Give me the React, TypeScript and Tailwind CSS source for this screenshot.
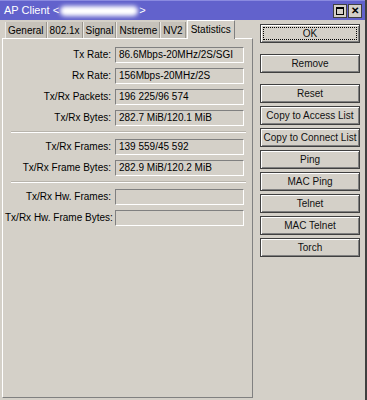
import React from 'react'

const rows1 = [
  { label: 'Tx Rate:', value: '86.6Mbps-20MHz/2S/SGI' },
  { label: 'Rx Rate:', value: '156Mbps-20MHz/2S' },
  { label: 'Tx/Rx Packets:', value: '196 225/96 574' },
  { label: 'Tx/Rx Bytes:', value: '282.7 MiB/120.1 MiB' },
]
const rows2 = [
  { label: 'Tx/Rx Frames:', value: '139 559/45 592' },
  { label: 'Tx/Rx Frame Bytes:', value: '282.9 MiB/120.2 MiB' },
]
const rows3 = [
  { label: 'Tx/Rx Hw. Frames:', value: '' },
  { label: 'Tx/Rx Hw. Frame Bytes:', value: '' },
]

const tabs = ['General', '802.1x', 'Signal', 'Nstreme', 'NV2']

const buttons = [
  'Reset',
  'Copy to Access List',
  'Copy to Connect List',
  'Ping',
  'MAC Ping',
  'Telnet',
  'MAC Telnet',
  'Torch',
]

function Field({ label, value }: { label: string; value: string }) {
  return (
    <div className="flex items-center h-[21px]">
      <span className="w-[110px] shrink-0 text-right pr-[4px] whitespace-nowrap">{label}</span>
      <div className="w-[129px] h-[16px] border border-t-[#808080] border-l-[#808080] border-b-white border-r-white bg-[#d4d0c8] flex items-center pl-[3px] whitespace-nowrap">
        {value}
      </div>
    </div>
  )
}

function Sep() {
  return <div className="ml-[6px] w-[235px] my-[3px] border-t border-t-[#b8b4ac] border-b border-b-white" />
}

function Btn({ label, focus }: { label: string; focus?: boolean }) {
  return (
    <button className="relative w-[100px] h-[19px] shrink-0 border border-[#404040] bg-[#d4d0c8] p-0 text-[10px] text-[#111] shadow-[inset_1px_1px_0_#ffffff,inset_-1px_-1px_0_#808080] flex items-center justify-center whitespace-nowrap">
      {focus && <span className="absolute inset-[2px] border border-dotted border-black" />}
      {label}
    </button>
  )
}

export default function App() {
  return (
    <div className="w-[367px] h-[400px] bg-[#d4d0c8] flex flex-col text-[10px] text-black font-['Liberation_Sans',sans-serif] border-r-2 border-r-[#404040] overflow-hidden">
      <div className="h-[20px] shrink-0 bg-[#6262cc] border-t border-t-[#8a8ae0] flex items-center justify-between pl-[4px] pr-[3px] text-white text-[11px]">
        <div className="flex items-center">
          <span>AP Client &lt;</span>
          <span className="w-[78px] h-[10px] bg-white rounded-full blur-[2px] mx-[1px]" />
          <span>&gt;</span>
        </div>
        <div className="flex gap-[1px]">
          <div className="w-[14px] h-[14px] bg-[#d4d0c8] border border-[#404040] flex items-center justify-center">
            <div className="w-[8px] h-[8px] border border-black border-t-2" />
          </div>
          <div className="w-[14px] h-[14px] bg-[#d4d0c8] border border-[#404040] flex items-center justify-center text-[10px] font-bold leading-none text-black">
            ✕
          </div>
        </div>
      </div>
      <div className="flex flex-1">
        <div className="w-[253px] flex flex-col pl-[2px]">
          <div className="flex items-end h-[18px] pl-[3px]">
            {tabs.map(t => (
              <div key={t} className="h-[16px] bg-[#c6c2ba] border-l border-l-[#ebe9e4] border-r border-r-[#9a968e] px-[2px] flex items-center">
                {t}
              </div>
            ))}
            <div className="h-[19px] bg-[#d4d0c8] border-t border-l border-t-white border-l-white border-r border-r-[#808080] px-[3px] pb-[2px] flex items-center -mb-[1px] relative ml-[1px]">
              Statistics
            </div>
          </div>
          <div className="flex-1 border-l border-t border-l-white border-t-white border-r border-b border-r-[#808080] border-b-[#808080] mb-[2px] pt-[5px] pl-[2px]">
            {rows1.map(r => <Field key={r.label} {...r} />)}
            <Sep />
            {rows2.map(r => <Field key={r.label} {...r} />)}
            <Sep />
            {rows3.map(r => <Field key={r.label} {...r} />)}
          </div>
        </div>
        <div className="flex-1 pl-[7px] pt-[4px] flex flex-col gap-[3px]">
          <Btn label="OK" focus />
          <div className="h-[5px] shrink-0" />
          <Btn label="Remove" />
          <div className="h-[5px] shrink-0" />
          {buttons.map(b => <Btn key={b} label={b} />)}
        </div>
      </div>
    </div>
  )
}
